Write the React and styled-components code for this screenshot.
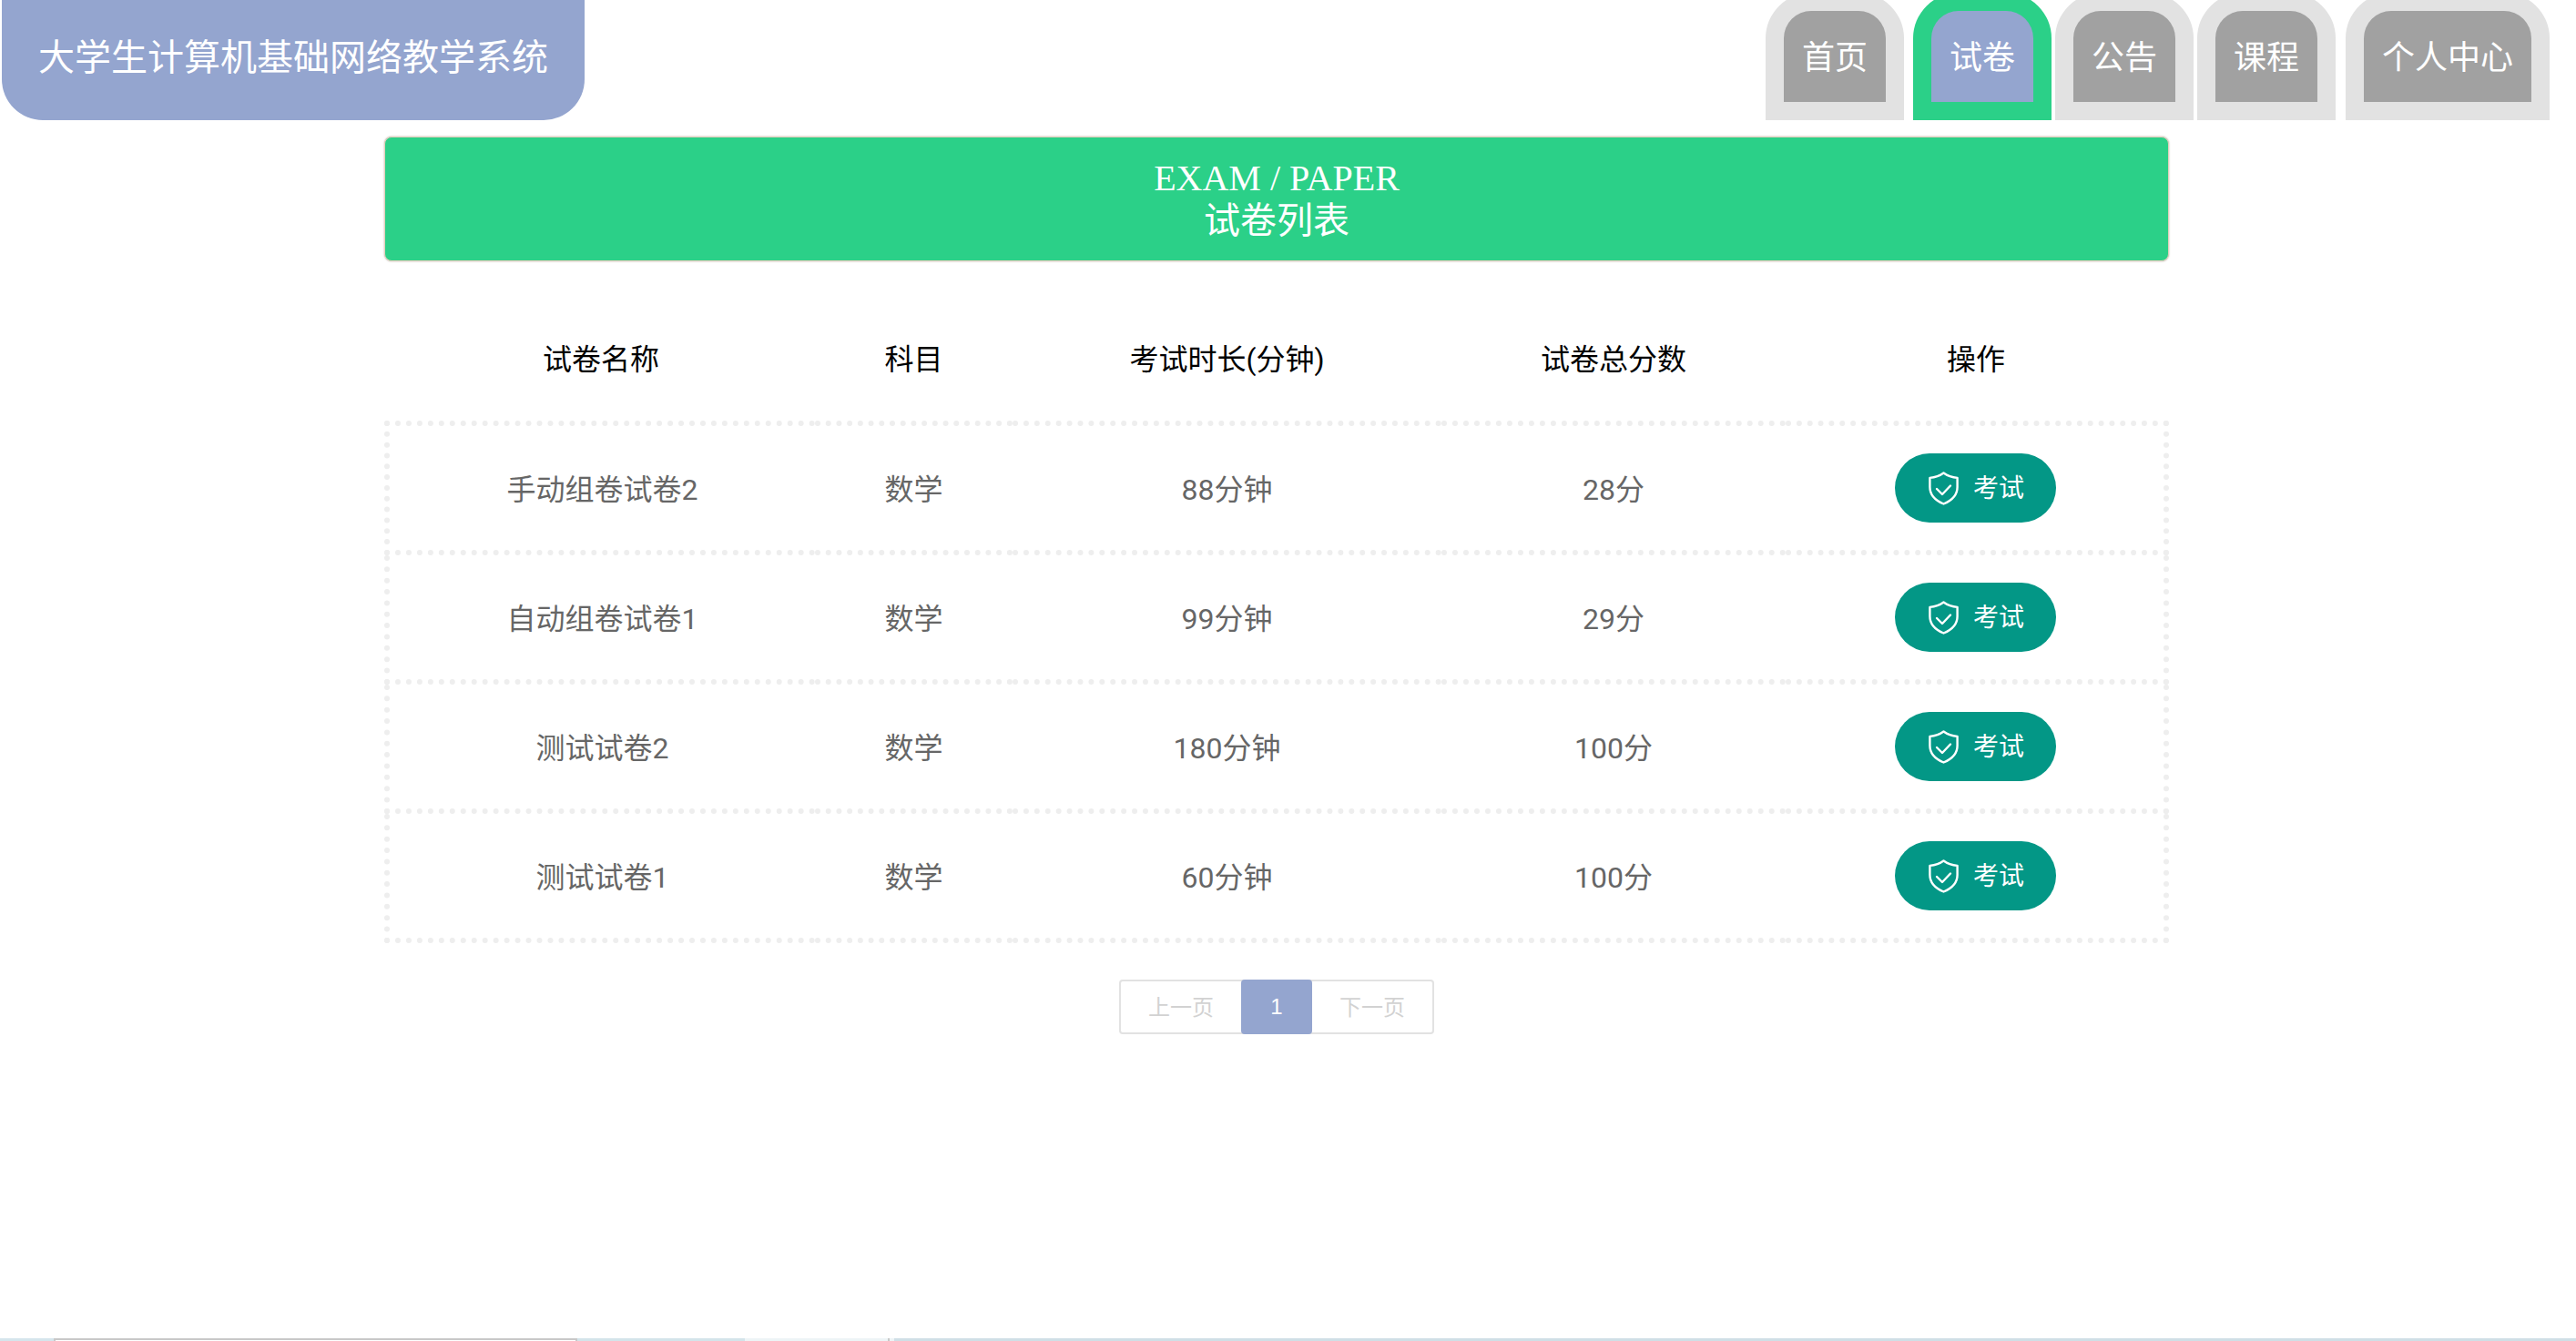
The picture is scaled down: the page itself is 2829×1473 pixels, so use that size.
import React from 'react';
import styled, { createGlobalStyle } from 'styled-components';

const GlobalStyle = createGlobalStyle`
  html, body {
    margin: 0;
    padding: 0;
    background: #fff;
    overflow: hidden;
  }
  body {
    font-family: Roboto, "Noto Sans CJK SC", sans-serif;
  }
`;

const Page = styled.div`
  height: 100vh;
  width: 100%;
  display: flex;
  flex-direction: column;
`;

const Content = styled.div`
  flex: 1;
  width: 2804px;
`;

const Header = styled.header`
  height: 132px;
  overflow: hidden;
  display: flex;
  justify-content: space-between;
  padding: 0 4px 0 2px;
`;

const Brand = styled.div`
  box-sizing: border-box;
  width: 640px;
  height: 132px;
  padding-bottom: 13px;
  background: #94a5cf;
  border-radius: 0 0 45px 45px;
  color: #fff;
  font-size: 40px;
  display: flex;
  align-items: center;
  justify-content: center;
`;

const Nav = styled.nav`
  display: flex;
`;

const NavItem = styled.div`
  margin-left: ${(p) => p.$gap}px;
  margin-top: -8px;
  height: 100px;
  padding: 20px;
  background: ${(p) => (p.$active ? '#2bd088' : '#e2e2e2')};
  border-radius: 50px 50px 0 0;
`;

const NavLink = styled.a`
  box-sizing: border-box;
  height: 100px;
  padding: 0 20px 4px;
  display: flex;
  align-items: center;
  color: #fff;
  font-size: 36px;
  background: ${(p) => (p.$active ? '#94a5cf' : '#a1a1a1')};
  border-radius: 30px 30px 0 0;
`;

const Main = styled.main`
  width: 1960px;
  margin: 18px auto 0;
`;

const Banner = styled.div`
  box-sizing: border-box;
  height: 137px;
  background: #2bd088;
  border: 1px solid #e2cfbb;
  box-shadow: 0 0 2px rgba(130, 110, 90, 0.6);
  border-radius: 8px;
  color: #fff;
  font-family: "Liberation Serif", "Noto Sans CJK SC", serif;
  font-size: 40px;
  line-height: 47px;
  display: flex;
  flex-direction: column;
  align-items: center;
  justify-content: center;
`;

const Table = styled.table`
  width: 1954px;
  margin: 33px auto 0;
  border-collapse: collapse;
  table-layout: fixed;
`;

const HeadCell = styled.th`
  height: 140px;
  padding: 2px 0 0;
  font-size: 32px;
  font-weight: 400;
  color: #000;
  text-align: center;
`;

const Cell = styled.td`
  height: ${(p) => (p.$action ? 136 : 133)}px;
  padding: ${(p) => (p.$action ? '0 0 0 2px' : '0 0 3px')};
  font-size: 32px;
  color: #666;
  text-align: center;
  border-top: 6px dotted #eee;
  border-bottom: 6px dotted #eee;
  &:first-child {
    border-left: 6px dotted #eee;
  }
  &:last-child {
    border-right: 6px dotted #eee;
  }
`;

const ExamButton = styled.button`
  box-sizing: border-box;
  width: 177px;
  height: 76px;
  margin: 0 auto;
  padding: 0 0 0 37px;
  border: 0;
  border-radius: 38px;
  background: #039786;
  color: #fff;
  font-family: inherit;
  font-size: 28px;
  display: flex;
  align-items: center;
  gap: 16px;
`;

const ButtonLabel = styled.span`
  padding-bottom: 4px;
`;

const Pager = styled.div`
  width: 346px;
  height: 60px;
  margin: 40px auto 0;
  display: flex;
  box-sizing: border-box;
  border: 2px solid #e2e2e2;
  border-radius: 4px;
`;

const PageLink = styled.a`
  flex: 1;
  padding-bottom: 4px;
  display: flex;
  align-items: center;
  justify-content: center;
  font-size: 24px;
  color: #d2d2d2;
`;

const PageCurrent = styled.a`
  width: 78px;
  margin: -2px 0;
  display: flex;
  align-items: center;
  justify-content: center;
  font-size: 24px;
  font-family: "Liberation Sans", sans-serif;
  color: #fff;
  background: #94a5cf;
  border-radius: 4px;
`;

const Strip = styled.div`
  height: 3px;
  display: flex;
`;

const StripPart = styled.div`
  box-sizing: border-box;
  width: ${(p) => p.$w};
  flex: ${(p) => (p.$w ? 'none' : 1)};
  background: ${(p) => p.$c};
`;

const StripFrame = styled.div`
  box-sizing: border-box;
  width: 575px;
  background: #fff;
  border: 2px solid #c8c8c8;
  border-bottom: 0;
`;

const ShieldIcon = () => (
  <svg width="33" height="37" viewBox="0 0 33 37" fill="none" stroke="#fff" strokeWidth="2.4" strokeLinecap="round" strokeLinejoin="round">
    <path d="M16.5 1.5C20.5 4.5 26 6.4 31.6 6.9V17C31.6 26 25 32 16.5 35.5C8 32 1.4 26 1.4 17V6.9C7 6.4 12.5 4.5 16.5 1.5Z" />
    <path d="M9 19L15 25L24 15.5" />
  </svg>
);

const navItems = [
  { label: '首页', gap: 0 },
  { label: '试卷', gap: 10, active: true },
  { label: '公告', gap: 4 },
  { label: '课程', gap: 4 },
  { label: '个人中心', gap: 11 },
];

const papers = [
  { name: '手动组卷试卷2', subject: '数学', time: '88分钟', score: '28分' },
  { name: '自动组卷试卷1', subject: '数学', time: '99分钟', score: '29分' },
  { name: '测试试卷2', subject: '数学', time: '180分钟', score: '100分' },
  { name: '测试试卷1', subject: '数学', time: '60分钟', score: '100分' },
];

const columns = ['试卷名称', '科目', '考试时长(分钟)', '试卷总分数', '操作'];
const colWidths = [470, 217, 471, 378, 418];

export default function App() {
  return (
    <Page>
      <GlobalStyle />
      <Content>
        <Header>
          <Brand>大学生计算机基础网络教学系统</Brand>
          <Nav>
            {navItems.map((item) => (
              <NavItem key={item.label} $gap={item.gap} $active={item.active}>
                <NavLink $active={item.active}>{item.label}</NavLink>
              </NavItem>
            ))}
          </Nav>
        </Header>
        <Main>
          <Banner>
            <div>EXAM / PAPER</div>
            <div>试卷列表</div>
          </Banner>
          <Table>
            <colgroup>
              {colWidths.map((w, i) => (
                <col key={i} width={w} />
              ))}
            </colgroup>
            <thead>
              <tr>
                {columns.map((c) => (
                  <HeadCell key={c}>{c}</HeadCell>
                ))}
              </tr>
            </thead>
            <tbody>
              {papers.map((p) => (
                <tr key={p.name}>
                  <Cell>{p.name}</Cell>
                  <Cell>{p.subject}</Cell>
                  <Cell>{p.time}</Cell>
                  <Cell>{p.score}</Cell>
                  <Cell $action>
                    <ExamButton>
                      <ShieldIcon />
                      <ButtonLabel>考试</ButtonLabel>
                    </ExamButton>
                  </Cell>
                </tr>
              ))}
            </tbody>
          </Table>
          <Pager>
            <PageLink>上一页</PageLink>
            <PageCurrent>1</PageCurrent>
            <PageLink>下一页</PageLink>
          </Pager>
        </Main>
      </Content>
      <Strip>
        <StripPart $w="59px" $c="#d5e5ec" />
        <StripFrame />
        <StripPart $w="184px" $c="#d3e4ea" />
        <StripPart $w="157px" $c="#edf4f6" />
        <StripPart $w="2px" $c="#c8c8c8" />
        <StripPart $w="5px" $c="#edf4f6" />
        <StripPart $c="#cfdfe6" />
      </Strip>
    </Page>
  );
}
